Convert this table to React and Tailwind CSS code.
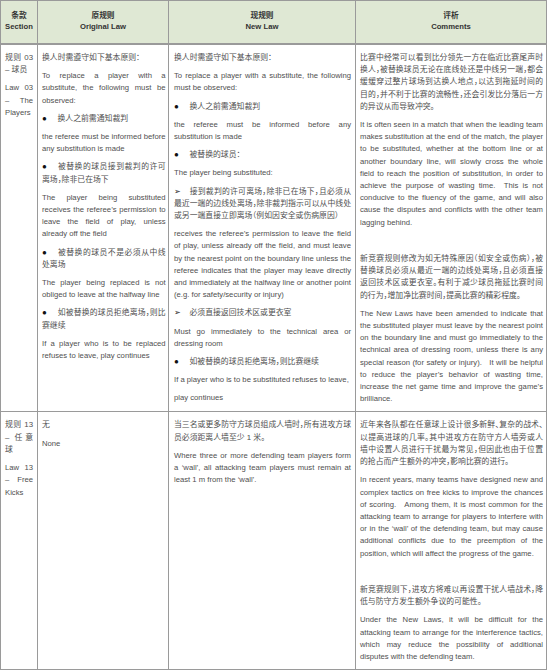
import React from 'react';

const EN = "text-[7.7px] leading-[12.2px] mb-[6px] text-justify";
const ZH = "text-[7.85px] leading-[12.2px] mb-[6px] text-justify [font-feature-settings:'halt']";
const DOT = "before:content-['●'] before:inline-block before:w-[15.5px] before:text-[8px] before:leading-none before:text-[#111]";
const ARROW = "before:content-['➢'] before:inline-block before:w-[15.5px] before:text-[7.5px] before:leading-none before:text-[#222]";

function En({ children }) {
  return <p className={EN}>{children}</p>;
}

function Zh({ children, mark }) {
  const m = mark === 'dot' ? DOT : mark === 'arrow' ? ARROW : '';
  return <p className={`${ZH} ${m}`}>{children}</p>;
}

function Blank() {
  return <p className={EN}>{'\u00a0'}</p>;
}

function HeadCell({ zh, en }) {
  return (
    <div className="h-[44px] border-r border-b-2 border-[#9a9a9a] bg-[#dfe8d4] flex flex-col items-center pt-[8.5px] text-[7.7px] leading-[11px] font-bold text-[#333]">
      <span>{zh}</span>
      <span>{en}</span>
    </div>
  );
}

export default function App() {
  const cell = "border-r border-b border-[#9a9a9a] pt-[7px]";

  return (
    <div className="min-h-screen bg-white font-['Liberation_Sans','Noto_Sans_CJK_SC',sans-serif] text-[#4f4f4f]">
      <div className="w-[547px] grid grid-cols-[37px_131px_187px_191px] border-l border-t border-[#9a9a9a]">
        <HeadCell zh="条款" en="Section" />
        <HeadCell zh="原规则" en="Original Law" />
        <HeadCell zh="现规则" en="New Law" />
        <HeadCell zh="评析" en="Comments" />

        {/* Law 03 */}
        <div className={`${cell} pl-[4px] pr-[4px]`}>
          <Zh>规则 03 – 球员</Zh>
          <En>Law 03 – The Players</En>
        </div>
        <div className={`${cell} pl-[4px] pr-[2.4px]`}>
          <Zh>换人时需遵守如下基本原则：</Zh>
          <En>To replace a player with a substitute, the following must be observed:</En>
          <Zh mark="dot">换人之前需通知裁判</Zh>
          <En>the referee must be informed before any substitution is made</En>
          <Zh mark="dot">被替换的球员接到裁判的许可离场，除非已在场下</Zh>
          <En>The player being substituted receives the referee’s permission to leave the field of play, unless already off the field</En>
          <Zh mark="dot">被替换的球员不是必须从中线处离场</Zh>
          <En>The player being replaced is not obliged to leave at the halfway line</En>
          <Zh mark="dot">如被替换的球员拒绝离场，则比赛继续</Zh>
          <En>If a player who is to be replaced refuses to leave, play continues</En>
        </div>
        <div className={`${cell} pl-[5px] pr-[4px]`}>
          <Zh>换人时需遵守如下基本原则：</Zh>
          <En>To replace a player with a substitute, the following must be observed:</En>
          <Zh mark="dot">换人之前需通知裁判</Zh>
          <En>the referee must be informed before any substitution is made</En>
          <Zh mark="dot">被替换的球员：</Zh>
          <En>The player being substituted:</En>
          <Zh mark="arrow">接到裁判的许可离场，除非已在场下，且必须从最近一端的边线处离场，除非裁判指示可以从中线处或另一端直接立即离场（例如因安全或伤病原因）</Zh>
          <En>receives the referee’s permission to leave the field of play, unless already off the field, and must leave by the nearest point on the boundary line unless the referee indicates that the player may leave directly and immediately at the halfway line or another point (e.g. for safety/security or injury)</En>
          <Zh mark="arrow">必须直接返回技术区或更衣室</Zh>
          <En>Must go immediately to the technical area or dressing room</En>
          <Zh mark="dot">如被替换的球员拒绝离场，则比赛继续</Zh>
          <p className="text-[7.7px] leading-[12.2px] mb-[6px]">If a player who is to be substituted refuses to leave,</p>
          <p className="text-[7.7px] leading-[12.2px] mb-[6px]">play continues</p>
        </div>
        <div className={`${cell} pl-[4px] pr-[3px]`}>
          <Zh>比赛中经常可以看到比分领先一方在临近比赛尾声时换人，被替换球员无论在底线处还是中线另一端，都会缓缓穿过整片球场到达换人地点，以达到拖延时间的目的，并不利于比赛的流畅性，还会引发比分落后一方的异议从而导致冲突。</Zh>
          <En>{"It is often seen in a match that when the leading team makes substitution at the end of the match, the player to be substituted, whether at the bottom line or at another boundary line, will slowly cross the whole field to reach the position of substitution, in order to achieve the purpose of wasting time.\u00a0 This is not conducive to the fluency of the game, and will also cause the disputes and conflicts with the other team lagging behind."}</En>
          <Blank />
          <Zh>新竞赛规则修改为如无特殊原因（如安全或伤病），被替换球员必须从最近一端的边线处离场，且必须直接返回技术区或更衣室。有利于减少球员拖延比赛时间的行为，增加净比赛时间，提高比赛的精彩程度。</Zh>
          <En>{"The New Laws have been amended to indicate that the substituted player must leave by the nearest point on the boundary line and must go immediately to the technical area of dressing room, unless there is any special reason (for safety or injury).\u00a0\u00a0 It will be helpful to\u00a0reduce the player’s behavior of wasting time, increase the net game time and improve the game’s brilliance."}</En>
        </div>

        {/* Law 13 */}
        <div className={`${cell} pl-[4px] pr-[4px]`}>
          <Zh>规则 13 – 任意球</Zh>
          <En>Law 13 – Free Kicks</En>
        </div>
        <div className={`${cell} pl-[4px] pr-[2.4px]`}>
          <Zh>无</Zh>
          <En>None</En>
        </div>
        <div className={`${cell} pl-[5px] pr-[4px]`}>
          <Zh>当三名或更多防守方球员组成人墙时，所有进攻方球员必须距离人墙至少 1 米。</Zh>
          <En>{"Where three or more defending team players form a\u00a0‘wall’, all attacking team players must remain at least 1 m from the ‘wall’."}</En>
        </div>
        <div className={`${cell} pl-[4px] pr-[3px]`}>
          <Zh>近年来各队都在任意球上设计很多新鲜、复杂的战术、以提高进球的几率。其中进攻方在防守方人墙旁或人墙中设置人员进行干扰最为常见，但因此也由于位置的抢占而产生额外的冲突，影响比赛的进行。</Zh>
          <En>{"In recent years, many teams have designed new and complex tactics on free kicks to improve the chances of scoring.\u00a0\u00a0 Among them, it is most common for the attacking team to arrange for players to interfere with or in the ‘wall’ of the defending team, but may cause additional conflicts due to the preemption of the position, which will affect the progress of the game."}</En>
          <Blank />
          <Zh>新竞赛规则下，进攻方将难以再设置干扰人墙战术，降低与防守方发生额外争议的可能性。</Zh>
          <En>Under the New Laws, it will be difficult for the attacking team to arrange for the interference tactics, which may reduce the possibility of additional disputes with the defending team.</En>
        </div>
      </div>
    </div>
  );
}
